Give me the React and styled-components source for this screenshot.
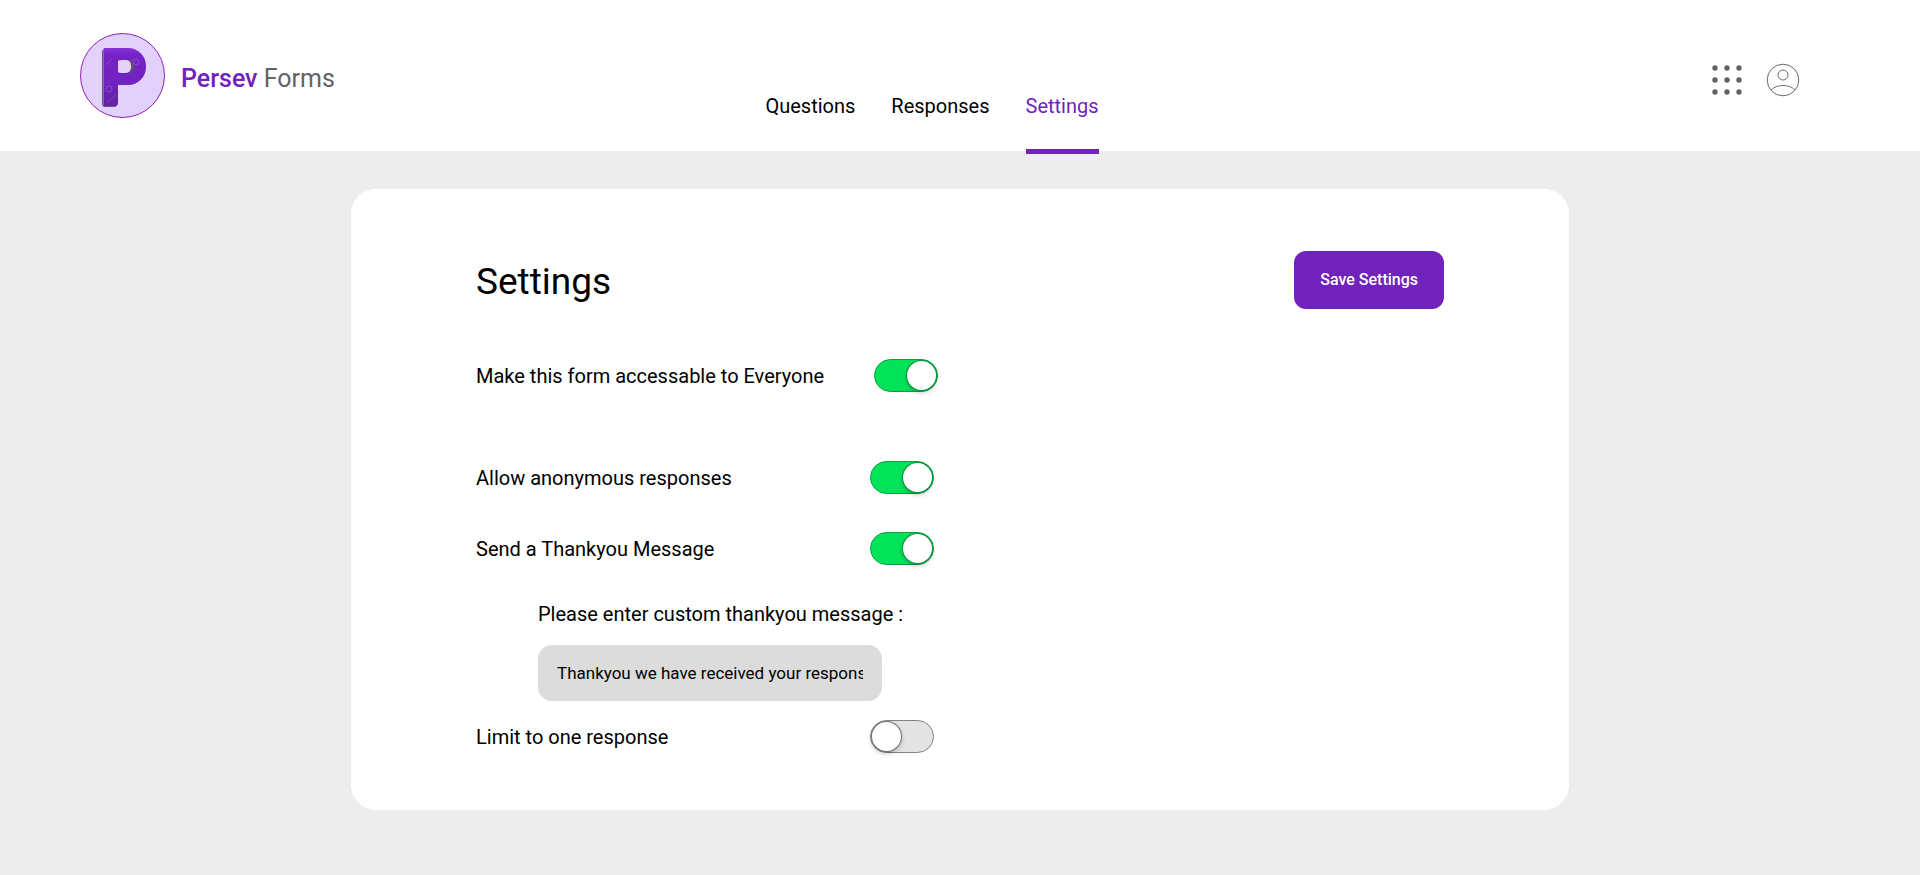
import React, { useState } from "react";
import styled, { createGlobalStyle } from "styled-components";

const GlobalStyle = createGlobalStyle`
  *, *::before, *::after { box-sizing: border-box; }
  body {
    margin: 0;
    background: #ededed;
    color: #000;
    font-family: Roboto, "Liberation Sans", sans-serif;
    font-size: 20px;
    line-height: 24px;
  }
`;

const Header = styled.header`
  display: grid;
  grid-template-columns: 1fr auto 1fr;
  height: 151px;
  padding: 0 120px 0 80px;
  background: #fff;
`;

const Brand = styled.a`
  display: flex;
  align-items: center;
  gap: 15px;
  color: #5f6368;
  font-size: 25px;
  line-height: 32px;
  text-decoration: none;
  white-space: nowrap;
`;

const BrandName = styled.span`
  padding-top: 7px;
`;

const BrandStrong = styled.strong`
  color: #7122ba;
  font-weight: 500;
`;

const Nav = styled.nav`
  display: flex;
  align-items: flex-end;
  gap: 36px;
  margin-right: 16px;
`;

const Tab = styled.a`
  height: 60px;
  margin-bottom: -3px;
  border-bottom: 5px solid ${(p) => (p.$active ? "#7122ba" : "transparent")};
  color: ${(p) => (p.$active ? "#7122ba" : "#000")};
  text-decoration: none;
`;

const Actions = styled.div`
  display: flex;
  align-items: center;
  justify-content: flex-end;
  gap: 24px;
  padding-top: 8px;
`;

const IconButton = styled.button`
  display: flex;
  padding: 0;
  border: 0;
  background: none;
  color: #5f6368;
  cursor: pointer;
`;

const Card = styled.main`
  max-width: 1218px;
  margin: 38px auto 65px;
  padding: 62px 125px 57px;
  border-radius: 25px;
  background: #fff;
`;

const CardHead = styled.div`
  display: flex;
  align-items: center;
  justify-content: space-between;
  margin-bottom: 50px;
`;

const Title = styled.h1`
  margin: 0;
  padding-top: 4px;
  font-size: 37px;
  font-weight: 400;
  line-height: 44px;
`;

const SaveButton = styled.button`
  height: 58px;
  padding: 0 26px;
  border: 0;
  border-radius: 12px;
  background: #7122ba;
  color: #fff;
  font: 500 16px/20px Roboto, "Liberation Sans", sans-serif;
  cursor: pointer;
`;

const Row = styled.div`
  display: flex;
  align-items: center;
  height: 33px;
  margin-bottom: ${(p) => p.$space || 0}px;
`;

const RowLabel = styled.label`
  width: ${(p) => (p.$wide ? 398 : 394)}px;
`;

const Switch = styled.input`
  appearance: none;
  display: flex;
  justify-content: flex-start;
  width: 64px;
  height: 33px;
  margin: 0;
  padding: 1px;
  border: 1px solid #838383;
  border-radius: 17px;
  background: #e4e4e4;
  cursor: pointer;

  &::before {
    content: "";
    width: 29px;
    height: 29px;
    border-radius: 50%;
    background: #fff;
    box-shadow: 0 0 0 1px #707070, 0 2px 5px rgba(0, 0, 0, 0.3);
  }

  &:checked {
    justify-content: flex-end;
    border-color: #0a9f43;
    background: #02e35a;
  }

  &:checked::before {
    box-shadow: 0 0 0 1px #07913b, 0 2px 5px rgba(0, 0, 0, 0.3);
  }
`;

const Message = styled.div`
  display: flex;
  flex-direction: column;
  align-items: flex-start;
  gap: 19px;
  margin: 0 0 19px 62px;
`;

const TextInput = styled.input`
  width: 344px;
  max-width: 100%;
  height: 56px;
  padding: 0 19px;
  border: 0;
  border-radius: 14px;
  background: #dcdcdc;
  color: #000;
  font: 400 17px/20px Roboto, "Liberation Sans", sans-serif;
`;

const Logo = () => (
  <svg width="86" height="86" viewBox="0 0 86 86" aria-hidden="true">
    <defs>
      <linearGradient id="face" gradientUnits="userSpaceOnUse" x1="0" y1="15" x2="0" y2="73">
        <stop offset="0" stopColor="#8434d4" />
        <stop offset="0.12" stopColor="#7622c6" />
        <stop offset="0.6" stopColor="#7222c0" />
        <stop offset="1" stopColor="#6222a0" />
      </linearGradient>
    </defs>
    <circle cx="42.5" cy="42.5" r="42" fill="#e1d1fb" stroke="#8d1fb8" strokeWidth="1" />
    <rect x="22" y="16" width="15" height="58" rx="3" fill="#66547f" />
    <rect x="42" y="27" width="12" height="14" rx="5" fill="#555061" />
    <rect x="34" y="27" width="17" height="13" rx="5" fill="#e1d1fb" />
    <rect x="29" y="21" width="31" height="25" rx="12" fill="none" stroke="url(#face)" strokeWidth="12" />
    <rect x="23" y="15" width="15" height="58" rx="3" fill="url(#face)" />
    <rect x="23" y="15" width="26" height="12" rx="3" fill="url(#face)" />
    <rect x="34" y="40" width="14" height="12" fill="url(#face)" />
    <rect x="23" y="16" width="1" height="56" fill="#8f62bd" />
    <g fill="none" stroke="#b593dc" strokeWidth="1" opacity="0.35">
      <circle cx="56" cy="29" r="3" />
      <circle cx="29" cy="56" r="3" />
      <path d="M26 32l6-6M53 33l-4 5M27 70l9-8" />
    </g>
  </svg>
);

const AppsIcon = () => (
  <svg width="30" height="30" viewBox="0 0 30 30" fill="#636365" aria-hidden="true">
    {[3, 15, 27].map((y) => [3, 15, 27].map((x) => <circle key={`${x}-${y}`} cx={x} cy={y} r="2.7" />))}
  </svg>
);

const UserIcon = () => (
  <svg width="34" height="34" viewBox="0 0 34 34" fill="none" stroke="#6b6b6d" strokeWidth="1" aria-hidden="true">
    <circle cx="17" cy="17" r="15.8" />
    <circle cx="17" cy="12" r="5" />
    <path d="M5 27.2C8 24 12 22.5 17 22.5S26 24 29 27.2" />
  </svg>
);

function Setting({ id, label, initial, space, wide }) {
  const [on, setOn] = useState(initial);
  return (
    <Row $space={space}>
      <RowLabel htmlFor={id} $wide={wide}>{label}</RowLabel>
      <Switch id={id} type="checkbox" checked={on} onChange={() => setOn(!on)} />
    </Row>
  );
}

export default function App() {
  const [message, setMessage] = useState("Thankyou we have received your response");
  return (
    <>
      <GlobalStyle />
      <Header>
        <Brand href="#home">
          <Logo />
          <BrandName><BrandStrong>Persev</BrandStrong> Forms</BrandName>
        </Brand>
        <Nav>
          <Tab href="#questions">Questions</Tab>
          <Tab href="#responses">Responses</Tab>
          <Tab href="#settings" $active aria-current="page">Settings</Tab>
        </Nav>
        <Actions>
          <IconButton type="button" aria-label="Apps"><AppsIcon /></IconButton>
          <IconButton type="button" aria-label="Account"><UserIcon /></IconButton>
        </Actions>
      </Header>
      <Card>
        <CardHead>
          <Title>Settings</Title>
          <SaveButton type="button">Save Settings</SaveButton>
        </CardHead>
        <Setting id="everyone" label="Make this form accessable to Everyone" initial space={69} wide />
        <Setting id="anonymous" label="Allow anonymous responses" initial space={38} />
        <Setting id="thankyou" label="Send a Thankyou Message" initial space={37} />
        <Message>
          <label htmlFor="message">Please enter custom thankyou message :</label>
          <TextInput id="message" type="text" value={message} onChange={(e) => setMessage(e.target.value)} />
        </Message>
        <Setting id="limit" label="Limit to one response" initial={false} />
      </Card>
    </>
  );
}
